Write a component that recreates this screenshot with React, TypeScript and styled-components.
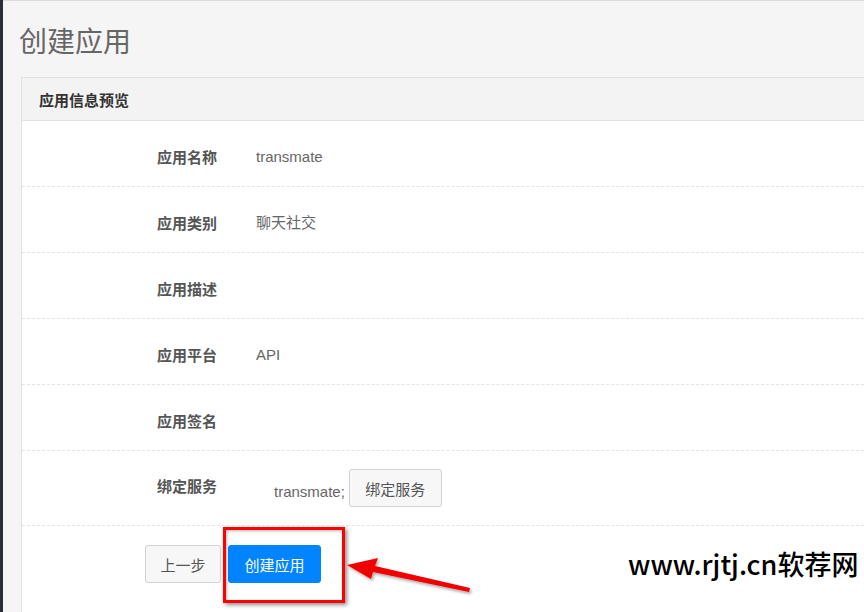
import React from "react";
import styled, { createGlobalStyle } from "styled-components";

const GlobalStyle = createGlobalStyle`
  html, body {
    margin: 0;
    padding: 0;
    background: #f5f5f5;
    font-family: "Liberation Sans", "Noto Sans CJK SC", sans-serif;
  }
  * { box-sizing: border-box; }
`;

type Item = { label: string; value?: string };

const items: Item[] = [
  { label: "应用名称", value: "transmate" },
  { label: "应用类别", value: "聊天社交" },
  { label: "应用描述" },
  { label: "应用平台", value: "API" },
  { label: "应用签名" },
];

export default function App() {
  return (
    <Page>
      <GlobalStyle />
      <SideStrip />
      <Main>
        <Heading>创建应用</Heading>
        <Panel>
          <PanelHeader>应用信息预览</PanelHeader>
          <PanelBody>
            {items.map((item) => (
              <Row key={item.label}>
                <Label>{item.label}</Label>
                <Value>{item.value}</Value>
              </Row>
            ))}
            <Row $tall>
              <Label $offset={6}>绑定服务</Label>
              <BindValue>
                <BindText>transmate;</BindText>
                <Button>绑定服务</Button>
              </BindValue>
            </Row>
            <Footer>
              <Button $wide={76}>上一步</Button>
              <Button $primary $wide={93}>创建应用</Button>
            </Footer>
          </PanelBody>
        </Panel>
      </Main>

      <Highlight />
      <Arrow viewBox="0 0 140 50" width="140" height="50">
        <defs>
          <filter id="sh" x="-20%" y="-40%" width="140%" height="180%">
            <feDropShadow dx="1.5" dy="2" stdDeviation="1.5" floodColor="#000" floodOpacity="0.35" />
          </filter>
        </defs>
        <polygon
          points="7,15 38,8 35,16 130,38 129,42 33,22 31,29"
          fill="#f10000"
          filter="url(#sh)"
        />
      </Arrow>
      <Watermark>www.rjtj.cn软荐网</Watermark>
    </Page>
  );
}

const Page = styled.div`
  position: relative;
  display: flex;
  width: 864px;
  height: 612px;
  overflow: hidden;
  background: #f5f5f5;
`;

const SideStrip = styled.div`
  width: 3px;
  flex-shrink: 0;
  background: #2a2f35;
`;

const Main = styled.div`
  flex: 1;
  padding-left: 18px;
  border-top: 1px solid #dcdcdc;
`;

const Heading = styled.h1`
  margin: 0 0 0 -2px;
  height: 76px;
  display: flex;
  align-items: center;
  padding-top: 2px;
  font-family: "Noto Sans CJK SC", sans-serif;
  font-size: 28px;
  font-weight: 400;
  color: #666;
`;

const Panel = styled.div`
  border: 1px solid #e2e2e2;
  border-right: none;
  background: #fff;
  height: 560px;
`;

const PanelHeader = styled.div`
  height: 43px;
  display: flex;
  align-items: center;
  padding-left: 17px;
  background: #f3f3f3;
  border-bottom: 1px solid #e2e2e2;
  font-family: "Noto Sans CJK SC", sans-serif;
  font-size: 15px;
  font-weight: 700;
  color: #333;
`;

const PanelBody = styled.div`
  background: #fff;
`;

const Row = styled.div<{ $tall?: boolean }>`
  display: flex;
  align-items: ${(p) => (p.$tall ? "flex-start" : "center")};
  height: ${(p) => (p.$tall ? "75px" : "66px")};
  padding: ${(p) => (p.$tall ? "18px 0 0" : "6px 0 0")};
  padding-left: 135px;
  border-bottom: 1px dashed #e4e4e4;
`;

const Label = styled.div<{ $offset?: number }>`
  width: 99px;
  flex-shrink: 0;
  margin-top: ${(p) => p.$offset ?? 0}px;
  line-height: 22px;
  font-family: "Noto Sans CJK SC", sans-serif;
  font-size: 15px;
  font-weight: 700;
  color: #555;
`;

const Value = styled.div`
  line-height: 22px;
  font-size: 15px;
  color: #666;
`;

const BindValue = styled.div`
  display: flex;
  align-items: flex-end;
  margin-left: 18px;
`;

const BindText = styled.span`
  line-height: 22px;
  margin-bottom: 4px;
  margin-right: 4px;
  font-size: 15px;
  color: #666;
`;

const Button = styled.button<{ $primary?: boolean; $wide?: number }>`
  width: ${(p) => p.$wide ?? 93}px;
  height: 38px;
  padding: 0;
  border-radius: 3px;
  border: 1px solid ${(p) => (p.$primary ? "#0084ff" : "#d2d2d2")};
  background: ${(p) => (p.$primary ? "#0084ff" : "#f7f7f7")};
  color: ${(p) => (p.$primary ? "#fff" : "#555")};
  font-family: "Noto Sans CJK SC", sans-serif;
  font-size: 15px;
  cursor: pointer;
`;

const Footer = styled.div`
  display: flex;
  gap: 7px;
  padding: 19px 0 0 123px;
`;

const Highlight = styled.div`
  position: absolute;
  left: 223px;
  top: 527px;
  width: 122px;
  height: 76px;
  border: 3px solid #f00;
  box-shadow: 2px 2px 4px rgba(0, 0, 0, 0.45), inset 1px 1px 3px rgba(0, 0, 0, 0.3);
  pointer-events: none;
`;

const Arrow = styled.svg`
  position: absolute;
  left: 340px;
  top: 550px;
  overflow: visible;
`;

const Watermark = styled.div`
  position: absolute;
  left: 628px;
  top: 544px;
  font-family: "Noto Sans CJK SC", sans-serif;
  font-size: 27px;
  font-weight: 500;
  color: #000;
  white-space: nowrap;
`;
